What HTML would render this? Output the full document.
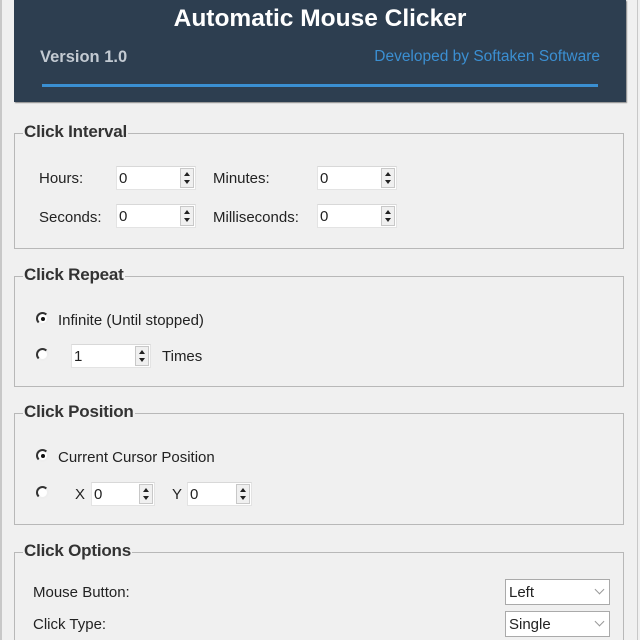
<!DOCTYPE html>
<html><head><meta charset="utf-8"><style>
*{margin:0;padding:0;box-sizing:border-box}
html,body{width:640px;height:640px;overflow:hidden}
body{background:#f0f0f0;position:relative;font-family:"Liberation Sans",sans-serif;color:#222;font-size:15px}
.a{position:absolute;white-space:nowrap}
.hdr{left:14px;top:0;width:612px;height:102px;background:#2d3e50;box-shadow:1px 1px 1px #888}
.grp{position:absolute;left:14px;width:610px;border:1px solid #b8b8b8}
.gt{position:absolute;left:8px;top:-12px;background:#f0f0f0;padding:0 1px;font-weight:bold;font-size:17px;color:#333;letter-spacing:-0.2px}
.spin{position:absolute;height:24px;background:#fff;border:1px solid #e3e3e3;border-top-color:#d8d8d8}
.spin span{position:absolute;left:2px;top:3px;font-size:15px}
.spin i{position:absolute;right:1px;top:1px;width:14px;height:20px;background:#f0f0f0;border:1px solid #c8c8c8}
.spin i:before{content:"";position:absolute;left:3px;top:3px;border:3.5px solid transparent;border-bottom:4px solid #222;border-top:0}
.spin i:after{content:"";position:absolute;left:3px;bottom:3px;border:3.5px solid transparent;border-top:4px solid #222;border-bottom:0}
.rad{position:absolute;width:13px;height:13px;border-radius:50%;background:#fff;border:2px solid #333;border-right-color:#eee;border-bottom-color:#eee}
.rad.on:after{content:"";position:absolute;left:2.5px;top:2.5px;width:4px;height:4px;border-radius:50%;background:#111}
.dd{position:absolute;left:505px;width:105px;background:#fff;border:1px solid #aaa;height:26px}
.dd span{position:absolute;left:3px;top:4px;font-size:15px}
.dd i{position:absolute;right:6px;top:6px;width:7px;height:7px;border-right:1px solid #999;border-bottom:1px solid #999;transform:rotate(45deg)}
</style></head><body>
<div class="a" style="left:0;top:0;width:2px;height:640px;background:#c8c8c8"></div>
<div class="a" style="left:637px;top:0;width:1px;height:640px;background:#c8c8c8"></div>
<div class="a hdr"></div>
<div class="a" style="left:14px;width:612px;top:5px;text-align:center;color:#fff;font-weight:bold;font-size:24.5px">Automatic Mouse Clicker</div>
<div class="a" style="left:40px;top:48px;color:#c3cad2;font-weight:bold;font-size:16.5px">Version 1.0</div>
<div class="a" style="right:40px;top:48px;color:#3b8fd2;font-size:15.5px">Developed by Softaken Software</div>
<div class="a" style="left:42px;top:84px;width:556px;height:3px;background:#3a8fd2"></div>

<div class="grp" style="top:133px;height:116px"><div class="gt">Click Interval</div></div>
<div class="a" style="left:39px;top:170px">Hours:</div>
<div class="spin" style="left:116px;top:166px;width:80px"><span>0</span><i></i></div>
<div class="a" style="left:213px;top:170px">Minutes:</div>
<div class="spin" style="left:317px;top:166px;width:80px"><span>0</span><i></i></div>
<div class="a" style="left:39px;top:209px">Seconds:</div>
<div class="spin" style="left:116px;top:204px;width:80px"><span>0</span><i></i></div>
<div class="a" style="left:213px;top:209px">Milliseconds:</div>
<div class="spin" style="left:317px;top:204px;width:80px"><span>0</span><i></i></div>

<div class="grp" style="top:276px;height:111px"><div class="gt">Click Repeat</div></div>
<div class="rad on" style="left:36px;top:312px"></div>
<div class="a" style="left:58px;top:312px">Infinite (Until stopped)</div>
<div class="rad" style="left:36px;top:348px"></div>
<div class="spin" style="left:71px;top:344px;width:80px"><span>1</span><i></i></div>
<div class="a" style="left:162px;top:348px">Times</div>

<div class="grp" style="top:413px;height:112px"><div class="gt">Click Position</div></div>
<div class="rad on" style="left:36px;top:449px"></div>
<div class="a" style="left:58px;top:449px">Current Cursor Position</div>
<div class="rad" style="left:36px;top:486px"></div>
<div class="a" style="left:75px;top:486px">X</div>
<div class="spin" style="left:91px;top:482px;width:64px"><span>0</span><i></i></div>
<div class="a" style="left:172px;top:486px">Y</div>
<div class="spin" style="left:187px;top:482px;width:65px"><span>0</span><i></i></div>

<div class="grp" style="top:552px;height:100px"><div class="gt">Click Options</div></div>
<div class="a" style="left:33px;top:584px">Mouse Button:</div>
<div class="dd" style="top:579px"><span>Left</span><i></i></div>
<div class="a" style="left:33px;top:616px">Click Type:</div>
<div class="dd" style="top:611px"><span>Single</span><i></i></div>
</body></html>
